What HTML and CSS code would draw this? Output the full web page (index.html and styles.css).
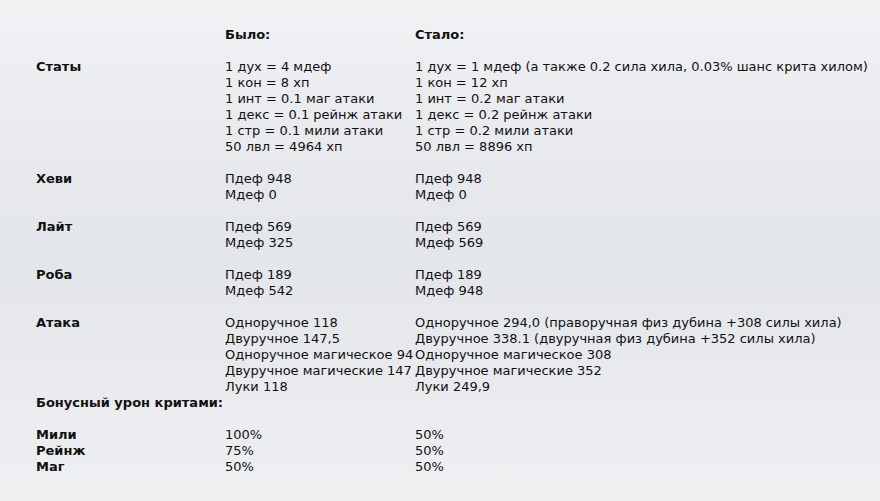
FILE: index.html
```html
<!DOCTYPE html>
<html lang="ru">
<head>
<meta charset="utf-8">
<title>Изменения статов</title>
<link rel="stylesheet" href="styles.css">
</head>
<body>
<table class="stats">
  <colgroup>
    <col class="c-label">
    <col class="c-old">
    <col class="c-new">
  </colgroup>
  <tr class="gap">
    <td></td>
    <td class="b">Было:</td>
    <td class="b">Стало:</td>
  </tr>
  <tr class="gap">
    <td class="b">Статы</td>
    <td>1 дух = 4 мдеф<br>1 кон = 8 хп<br>1 инт = 0.1 маг атаки<br>1 декс = 0.1 рейнж атаки<br>1 стр = 0.1 мили атаки<br>50 лвл = 4964 хп</td>
    <td>1 дух = 1 мдеф (а также 0.2 сила хила, 0.03% шанс крита хилом)<br>1 кон = 12 хп<br>1 инт = 0.2 маг атаки<br>1 декс = 0.2 рейнж атаки<br>1 стр = 0.2 мили атаки<br>50 лвл = 8896 хп</td>
  </tr>
  <tr class="gap">
    <td class="b">Хеви</td>
    <td>Пдеф 948<br>Мдеф 0</td>
    <td>Пдеф 948<br>Мдеф 0</td>
  </tr>
  <tr class="gap">
    <td class="b">Лайт</td>
    <td>Пдеф 569<br>Мдеф 325</td>
    <td>Пдеф 569<br>Мдеф 569</td>
  </tr>
  <tr class="gap">
    <td class="b">Роба</td>
    <td>Пдеф 189<br>Мдеф 542</td>
    <td>Пдеф 189<br>Мдеф 948</td>
  </tr>
  <tr>
    <td class="b">Атака</td>
    <td>Одноручное 118<br>Двуручное 147,5<br>Одноручное магическое 94<br>Двуручное магические 147<br>Луки 118</td>
    <td>Одноручное 294,0 (праворучная физ дубина +308 силы хила)<br>Двуручное 338.1 (двуручная физ дубина +352 силы хила)<br>Одноручное магическое 308<br>Двуручное магические 352<br>Луки 249,9</td>
  </tr>
  <tr class="gap">
    <td class="b" colspan="3">Бонусный урон критами:</td>
  </tr>
  <tr>
    <td class="b">Мили<br>Рейнж<br>Маг</td>
    <td>100%<br>75%<br>50%</td>
    <td>50%<br>50%<br>50%</td>
  </tr>
</table>
</body>
</html>
```
FILE: styles.css
```css
html {
  min-height: 100%;
  background: linear-gradient(to bottom, #f1f2f4 0%, #e9ebee 25%, #e3e6ea 50%, #e8eaed 75%, #eff0f2 100%);
}
body {
  margin: 0;
  padding: 27px 0 0 36px;
  font-family: "DejaVu Sans", Verdana, sans-serif;
  font-size: 13px;
  line-height: 16px;
  color: #111;
}
.stats {
  border-collapse: collapse;
  table-layout: fixed;
  width: 819px;
}
.c-label { width: 189px; }
.c-old { width: 190px; }
.c-new { width: 440px; }
.stats td {
  padding: 0;
  vertical-align: top;
  white-space: nowrap;
}
.stats tr.gap td {
  padding-bottom: 16px;
}
.b {
  font-weight: bold;
}
```
